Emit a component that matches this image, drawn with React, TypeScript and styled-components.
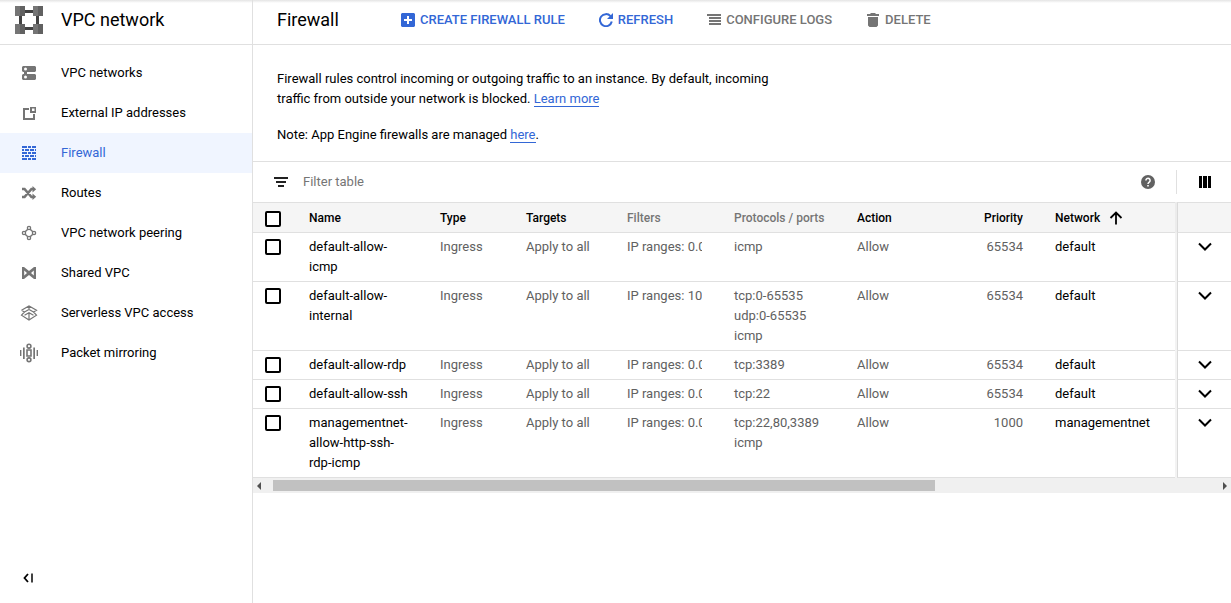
import React from "react";
import styled, { createGlobalStyle } from "styled-components";

const line = "#e0e0e0";
const blue = "#3367d6";
const gray = "#757575";

const GlobalStyle = createGlobalStyle`
  *, *::before, *::after { box-sizing: border-box; }
  body {
    margin: 0;
    background: #fff;
    color: #212121;
    font: 13px/20px Roboto, "Liberation Sans", sans-serif;
  }
  button, input { font: inherit; color: inherit; }
`;

const Page = styled.div`
  display: flex;
  min-height: 100vh;
  background: linear-gradient(#e4e4e4, #fff 3px);
`;

const Sidebar = styled.aside`
  display: flex;
  flex-direction: column;
  flex: none;
  width: 253px;
  border-right: 1px solid ${line};
`;

const Product = styled.div`
  display: flex;
  align-items: center;
  gap: 18px;
  height: 45px;
  padding: 0 15px 4px;
  border-bottom: 1px solid ${line};
  color: #000;
  font-size: 18px;
  line-height: 24px;
`;

const Nav = styled.nav`
  flex: 1;
  padding-top: 8px;
`;

const NavLink = styled.a<{ $active?: boolean }>`
  display: flex;
  align-items: center;
  gap: 22px;
  height: 40px;
  padding: 0 19px;
  color: ${(p) => (p.$active ? blue : "#000")};
  background: ${(p) => (p.$active ? "#f0f5ff" : "transparent")};
  text-decoration: none;

  svg { color: ${(p) => (p.$active ? blue : gray)}; }
`;

const IconButton = styled.button`
  display: flex;
  align-items: center;
  justify-content: center;
  width: 28px;
  height: 20px;
  margin: 0 auto;
  padding: 0;
  border: 0;
  background: none;
  color: #000;
  cursor: pointer;
`;

const SidebarFooter = styled.div`
  display: flex;
  padding: 0 0 15px 14px;

  ${IconButton} { margin: 0; }
`;

const Main = styled.main`
  flex: 1;
  min-width: 0;
`;

const ActionBar = styled.header`
  display: flex;
  align-items: center;
  height: 45px;
  padding: 0 24px 4px;
  border-bottom: 1px solid ${line};
`;

const Title = styled.h1`
  margin: 0;
  width: 124px;
  color: #000;
  font-size: 18px;
  font-weight: 400;
  line-height: 24px;
`;

const Actions = styled.div`
  display: flex;
  gap: 34px;
`;

const Action = styled.button`
  display: inline-flex;
  align-items: center;
  gap: 5px;
  padding: 0;
  border: 0;
  background: none;
  color: ${blue};
  font-weight: 500;
  white-space: nowrap;
  cursor: pointer;

  &:disabled { color: ${gray}; cursor: default; }
`;

const Intro = styled.section`
  padding: 24px 24px 16px;
  color: #000;
`;

const Paragraph = styled.p`
  max-width: 500px;
  margin: 0;

  & + & { margin-top: 16px; }
`;

const TextLink = styled.a`
  color: ${blue};
  text-decoration: none;
  border-bottom: 1px solid ${blue};
`;

const FilterBar = styled.div`
  display: flex;
  align-items: center;
  height: 41px;
  padding-left: 21px;
  border-top: 1px solid ${line};
`;

const FilterInput = styled.input`
  flex: 1;
  min-width: 0;
  margin-left: 15px;
  padding: 0;
  border: 0;
  outline: 0;
  background: none;

  &::placeholder { color: ${gray}; opacity: 1; }
`;

const ColumnsSlot = styled.div`
  display: flex;
  align-items: center;
  width: 55px;
  height: 24px;
  margin-left: 14px;
  padding-left: 2px;
  border-left: 1px solid ${line};
`;

const Table = styled.table`
  width: 100%;
  table-layout: fixed;
  border-collapse: separate;
  border-spacing: 0;
`;

const Col = styled.col<{ $width?: number }>`
  width: ${(p) => (p.$width ? `${p.$width}px` : "auto")};
`;

const HeadCell = styled.th<{ $muted?: boolean; $align?: string }>`
  height: 31px;
  padding: 0 16px;
  border-top: 1px solid ${line};
  border-bottom: 1px solid ${line};
  background: #f5f5f5;
  color: ${(p) => (p.$muted ? gray : "#000")};
  font-size: 12px;
  font-weight: 500;
  text-align: ${(p) => p.$align ?? "left"};
  white-space: nowrap;
`;

const SortLabel = styled.span`
  display: flex;
  align-items: center;
  gap: 9px;
`;

const Cell = styled.td<{ $strong?: boolean; $align?: string }>`
  padding: 4px 16px;
  border-bottom: 1px solid ${line};
  color: ${(p) => (p.$strong ? "#000" : "#616161")};
  text-align: ${(p) => p.$align ?? "left"};
  vertical-align: top;
`;

const CheckCell = styled(Cell)`
  padding: 6px 0 0 12px;
`;

const CheckHead = styled(HeadCell)`
  padding: 2px 0 0 12px;
`;

const EndCell = styled(Cell)`
  padding: 4px 0;
  border-left: 1px solid #dadada;
  box-shadow: -2px 0 0 #f3f3f3;
`;

const EndHead = styled(HeadCell)`
  padding: 0;
  border-left: 1px solid #dadada;
  box-shadow: -2px 0 0 #ececec;
`;

const Clip = styled.div`
  overflow: hidden;
  white-space: nowrap;
`;

const Checkbox = styled.input`
  appearance: none;
  display: block;
  width: 16px;
  height: 16px;
  margin: 0;
  border: 2px solid #000;
  border-radius: 2px;
  background: #fff;

  &:checked { background: #000; }
`;

const ScrollTrack = styled.div`
  display: flex;
  align-items: center;
  height: 15px;
  background: #f0f0f0;
`;

const ScrollArrow = styled.button`
  display: flex;
  align-items: center;
  justify-content: center;
  flex: none;
  width: 12px;
  height: 15px;
  padding: 0;
  border: 0;
  background: none;
  color: #505050;
`;

const ScrollLane = styled.div`
  flex: 1;
  padding-left: 8px;
`;

const ScrollThumb = styled.div`
  width: 70%;
  height: 11px;
  background: #c1c1c1;
`;

const Svg = ({ size = 20, children }: { size?: number; children: React.ReactNode }) => (
  <svg width={size} height={size} viewBox={`0 0 ${size} ${size}`} fill="currentColor" aria-hidden="true">
    {children}
  </svg>
);

const stroke = { fill: "none", stroke: "currentColor" };

const Logo = () => (
  <Svg size={28}>
    <path fill="#424242" d="M10 4h8v3h-8zM10 21h8v3h-8zM4 10h3v8H4zM21 10h3v8h-3z" />
    <path fill="#757575" d="M0 0h5v10H0zM18 0h5v10h-5zM0 18h5v10H0zM18 18h5v10h-5z" />
    <path fill="#616161" d="M5 0h5v10H5zM23 0h5v10h-5zM5 18h5v10H5zM23 18h5v10h-5z" />
  </Svg>
);

const navItems: { label: string; icon: React.ReactNode }[] = [
  {
    label: "VPC networks",
    icon: (
      <>
        <path d="M4 3h12l1 1v4l-1 1H8v2h8l1 1v4l-1 1H4l-1-1v-4l1-1h1V9H4L3 8V4z" />
        <circle cx="6.500" cy="6" r="1.500" fill="#fff" />
        <circle cx="6.500" cy="14" r="1.500" fill="#fff" />
      </>
    ),
  },
  {
    label: "External IP addresses",
    icon: (
      <>
        <path d="M10 6H5v10h10v-5" {...stroke} strokeWidth="2" />
        <path fillRule="evenodd" d="M11 4h6v6h-6zM13 5.500v2.500h2.500V5.500z" />
      </>
    ),
  },
  {
    label: "Firewall",
    icon: (
      <path d="M3 3h5v2H3zM9 3h3v2H9zM13 3h4v2h-4zM3 6h2v2H3zM6 6h4v2H6zM11 6h4v2h-4zM16 6h1v2h-1zM3 9h5v2H3zM9 9h3v2H9zM13 9h4v2h-4zM3 12h2v2H3zM6 12h4v2H6zM11 12h4v2h-4zM16 12h1v2h-1zM3 15h5v2H3zM9 15h3v2H9zM13 15h4v2h-4z" />
    ),
  },
  {
    label: "Routes",
    icon: (
      <>
        <path d="M3 6h2.500l7 8H15M3 14h2.500l7-8H15" {...stroke} strokeWidth="2.600" />
        <path d="M13.500 3 17.200 6.200 13.500 9.500zM13.500 10.500 17.200 13.800 13.500 17z" />
      </>
    ),
  },
  {
    label: "VPC network peering",
    icon: (
      <g {...stroke} strokeWidth="1.400">
        <circle cx="10" cy="5" r="1.600" />
        <circle cx="10" cy="15" r="1.600" />
        <circle cx="5" cy="10" r="1.600" />
        <circle cx="15" cy="10" r="1.600" />
        <path d="M8.800 6.200 6.200 8.800M11.200 6.200l2.600 2.600M6.200 11.200l2.600 2.600M13.800 11.200l-2.600 2.600" />
      </g>
    ),
  },
  {
    label: "Shared VPC",
    icon: (
      <path
        fillRule="evenodd"
        d="M3 4h2l5 4 5-4h2v12h-2l-5-4-5 4H3zM5.200 7.500v5L8 10zM14.800 7.500v5L12 10z"
      />
    ),
  },
  {
    label: "Serverless VPC access",
    icon: (
      <g {...stroke} strokeWidth="1.200">
        <path d="M2.500 7.200 10 3l7.500 4.200L14.500 9M5.500 9l-3-1.800M5.500 9 10 6.500 14.500 9M5.500 9l-3 3.200L10 17l7.500-4.800-3-3.200M5.500 12.200 10 9.700l4.500 2.500M10 3v3.500M10 9.700V16" />
      </g>
    ),
  },
  {
    label: "Packet mirroring",
    icon: (
      <>
        <path d="M1 7h1.400v6H1zM4 4.500h1.700v11.500H4zM14.300 4.500H16v11.500h-1.700zM17.600 7H19v6h-1.400z" />
        <g {...stroke} strokeWidth="1.600">
          <circle cx="10" cy="3.200" r="1.900" />
          <circle cx="10" cy="16.800" r="1.900" />
          <path d="M8 7h4v6H8z" />
        </g>
      </>
    ),
  },
];

const rules = [
  { name: "default-allow-icmp", filter: "IP ranges: 0.0.0.0/0", ports: ["icmp"], priority: 65534, network: "default" },
  {
    name: "default-allow-internal",
    filter: "IP ranges: 10.128.0.0/9",
    ports: ["tcp:0-65535", "udp:0-65535", "icmp"],
    priority: 65534,
    network: "default",
  },
  { name: "default-allow-rdp", filter: "IP ranges: 0.0.0.0/0", ports: ["tcp:3389"], priority: 65534, network: "default" },
  { name: "default-allow-ssh", filter: "IP ranges: 0.0.0.0/0", ports: ["tcp:22"], priority: 65534, network: "default" },
  {
    name: "managementnet-allow-http-ssh-rdp-icmp",
    filter: "IP ranges: 0.0.0.0/0",
    ports: ["tcp:22,80,3389", "icmp"],
    priority: 1000,
    network: "managementnet",
  },
];

const columnWidths = [40, 131, 86, 101, 107, 123, 111, 87, undefined, 54];

export default function App() {
  return (
    <>
      <GlobalStyle />
      <Page>
        <Sidebar>
          <Product>
            <Logo />
            <span>VPC network</span>
          </Product>
          <Nav>
            {navItems.map(({ label, icon }) => (
              <NavLink key={label} href="#" $active={label === "Firewall"}>
                <Svg>{icon}</Svg>
                {label}
              </NavLink>
            ))}
          </Nav>
          <SidebarFooter>
            <IconButton aria-label="Collapse menu">
              <Svg size={12}>
                <path d="M6 2 2.500 6 6 10" {...stroke} strokeWidth="1.800" />
                <path fill="#424242" d="M9 1.500h2v9H9z" />
              </Svg>
            </IconButton>
          </SidebarFooter>
        </Sidebar>
        <Main>
          <ActionBar>
            <Title>Firewall</Title>
            <Actions>
              <Action>
                <Svg size={14}>
                  <path fillRule="evenodd" d="M1 0h12l1 1v12l-1 1H1l-1-1V1zM6 3v3H3v2h3v3h2V8h3V6H8V3z" />
                </Svg>
                CREATE FIREWALL RULE
              </Action>
              <Action>
                <Svg size={14}>
                  <path d="M11.500 3.200A6 6 0 1 0 12.800 8.500" {...stroke} strokeWidth="2" />
                  <path d="M14 0v6H8z" />
                </Svg>
                REFRESH
              </Action>
              <Action disabled>
                <Svg size={14}>
                  <path d="M0 1h14v2H0zM2 4h12v2H2zM2 7h12v2H2zM2 10h12v2H2z" />
                </Svg>
                CONFIGURE LOGS
              </Action>
              <Action disabled>
                <Svg size={14}>
                  <path d="M1 1h3l1-1h4l1 1h3v2H1zM2 4h10v8.500L10.500 14h-7L2 12.500z" />
                </Svg>
                DELETE
              </Action>
            </Actions>
          </ActionBar>
          <Intro>
            <Paragraph>
              Firewall rules control incoming or outgoing traffic to an instance. By default, incoming traffic from
              outside your network is blocked. <TextLink href="#">Learn more</TextLink>
            </Paragraph>
            <Paragraph>
              Note: App Engine firewalls are managed <TextLink href="#">here</TextLink>.
            </Paragraph>
          </Intro>
          <FilterBar>
            <Svg size={14}>
              <path d="M0 2h14v2H0zM2 6h10v2H2zM4 10h6v2H4z" />
            </Svg>
            <FilterInput placeholder="Filter table" aria-label="Filter table" />
            <IconButton aria-label="Help">
              <Svg size={14}>
                <circle cx="7" cy="7" r="7" fill="#616161" />
                <path d="M4.900 5.400a2.100 2.100 0 1 1 3.300 1.700C7.400 7.700 7 8 7 9" fill="none" stroke="#fff" strokeWidth="1.500" />
                <path d="M6.200 10h1.600v1.600H6.200z" fill="#fff" />
              </Svg>
            </IconButton>
            <ColumnsSlot>
              <IconButton aria-label="Column display options">
                <Svg size={12}>
                  <path d="M0 0h3v12H0zM4 0h4v12H4zM9 0h3v12H9z" />
                </Svg>
              </IconButton>
            </ColumnsSlot>
          </FilterBar>
          <Table>
            <colgroup>
              {columnWidths.map((width, i) => (
                <Col key={i} $width={width} />
              ))}
            </colgroup>
            <thead>
              <tr>
                <CheckHead>
                  <Checkbox type="checkbox" aria-label="Select all rules" />
                </CheckHead>
                <HeadCell>Name</HeadCell>
                <HeadCell>Type</HeadCell>
                <HeadCell>Targets</HeadCell>
                <HeadCell $muted>Filters</HeadCell>
                <HeadCell $muted>Protocols / ports</HeadCell>
                <HeadCell>Action</HeadCell>
                <HeadCell $align="right">Priority</HeadCell>
                <HeadCell>
                  <SortLabel>
                    Network
                    <Svg size={14}>
                      <path d="M7 13.500V2M1.500 7 7 1.500 12.500 7" {...stroke} strokeWidth="1.800" />
                    </Svg>
                  </SortLabel>
                </HeadCell>
                <EndHead />
              </tr>
            </thead>
            <tbody>
              {rules.map((rule) => (
                <tr key={rule.name}>
                  <CheckCell>
                    <Checkbox type="checkbox" aria-label={`Select ${rule.name}`} />
                  </CheckCell>
                  <Cell $strong>{rule.name}</Cell>
                  <Cell>Ingress</Cell>
                  <Cell>Apply to all</Cell>
                  <Cell>
                    <Clip>{rule.filter}</Clip>
                  </Cell>
                  <Cell>
                    {rule.ports.map((port) => (
                      <div key={port}>{port}</div>
                    ))}
                  </Cell>
                  <Cell>Allow</Cell>
                  <Cell $align="right">{rule.priority}</Cell>
                  <Cell $strong>{rule.network}</Cell>
                  <EndCell>
                    <IconButton aria-label={`Expand ${rule.name}`}>
                      <Svg size={14}>
                        <path d="m1 3.500 6 6 6-6" {...stroke} strokeWidth="2" />
                      </Svg>
                    </IconButton>
                  </EndCell>
                </tr>
              ))}
            </tbody>
          </Table>
          <ScrollTrack>
            <ScrollArrow aria-label="Scroll left">
              <Svg size={8}>
                <path d="M6 0v8L2 4z" />
              </Svg>
            </ScrollArrow>
            <ScrollLane>
              <ScrollThumb />
            </ScrollLane>
            <ScrollArrow aria-label="Scroll right">
              <Svg size={8}>
                <path d="M2 0v8l4-4z" />
              </Svg>
            </ScrollArrow>
          </ScrollTrack>
        </Main>
      </Page>
    </>
  );
}
